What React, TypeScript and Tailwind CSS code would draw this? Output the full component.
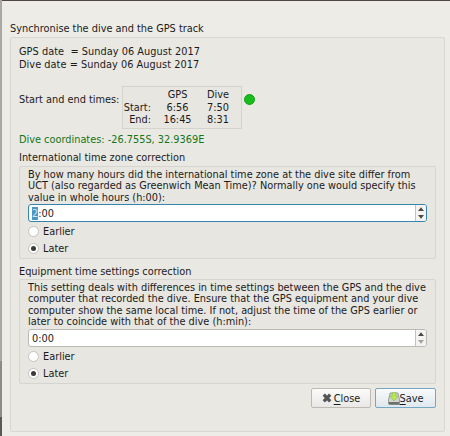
import { useState } from "react";

const ZONE_TEXT = [
  "By how many hours did the international time zone at the dive site differ from",
  "UCT (also regarded as Greenwich Mean Time)? Normally one would specify this",
  "value in whole hours (h:00):",
];

const EQUIPMENT_TEXT = [
  "This setting deals with differences in time settings between the GPS and the dive",
  "computer that recorded the dive. Ensure that the GPS equipment and your dive",
  "computer show the same local time. If not, adjust the time of the GPS earlier or",
  "later to coincide with that of the dive (h:min):",
];

function Paragraph({ lines }: { lines: string[] }) {
  return (
    <div>
      {lines.map((line) => (
        <p key={line} className="h-[11.3px] leading-[11.3px]">{line}</p>
      ))}
    </div>
  );
}

function SpinBox({ focused, minimum }: { focused?: boolean; minimum?: boolean }) {
  return (
    <div className={`flex h-[18px] w-[399px] items-center rounded-[3px] border bg-white ${focused ? "border-[#3584ae]" : "border-[#bcb9b5]"}`}>
      <div className="flex flex-1 pl-[3px] pt-[1px] leading-[13px]">
        {focused ? <span className="bg-[#4a96c4] text-[#d5e8f4]">2</span> : <span>0</span>}
        <span>:00</span>
      </div>
      <div className="flex h-full w-[11px] flex-col items-center justify-center gap-[4px] rounded-r-[2px] border-l border-[#c4c2be] bg-[#f4f3f1]">
        <svg width="6" height="4" viewBox="0 0 6 4"><path d="M0 4 3 .2 6 4Z" fill="#4b4845" /></svg>
        <svg width="6" height="4" viewBox="0 0 6 4"><path d="M0 0H6L3 3.8Z" fill={minimum ? "#a5a29e" : "#4b4845"} /></svg>
      </div>
    </div>
  );
}

function Radio({ label, checked, onSelect }: { label: string; checked: boolean; onSelect: () => void }) {
  return (
    <button type="button" role="radio" aria-checked={checked} onClick={onSelect} className="flex h-[17.3px] items-center gap-[4px]">
      <span className="flex size-[11px] items-center justify-center rounded-full border border-[#c5c2be] bg-white">
        {checked && <span className="size-[5px] rounded-full bg-[#3c3a3b]" />}
      </span>
      <span className="pt-[1px]">{label}</span>
    </button>
  );
}

function Choice() {
  const [value, setValue] = useState("Later");
  return (
    <div role="radiogroup" className="flex flex-col items-start pt-[0.4px]">
      {["Earlier", "Later"].map((name) => (
        <Radio key={name} label={name} checked={value === name} onSelect={() => setValue(name)} />
      ))}
    </div>
  );
}

function CrossIcon() {
  return (
    <svg width="10" height="10" viewBox="0 0 10 10">
      <path d="M1.8 1.6 8.2 8.4M8.2 1.6 1.8 8.4" stroke="#555" strokeWidth="3.2" />
    </svg>
  );
}

function SaveIcon() {
  return (
    <svg width="12" height="13" viewBox="0 0 12 13">
      <path d="M2 1H10L11.5 8V11.5Q11.5 12.5 10.5 12.5H1.5Q.5 12.5 .5 11.5V8Z" fill="#d0d3cf" stroke="#8b8e8b" strokeWidth=".8" />
      <path d="M.7 10H11.3V11.6Q11.2 12.4 10.4 12.4H1.6Q.8 12.4 .7 11.6Z" fill="#6d706e" />
      <path d="M4.2 .6H7.8V4.2H10L6 9 2 4.2H4.2Z" fill="#b9e84f" stroke="#8cba4c" strokeWidth=".6" />
    </svg>
  );
}

export default function App() {
  return (
    <main className="flex h-[436px] w-[450px] overflow-hidden whitespace-nowrap bg-[#edece7] font-['DejaVu_Sans',sans-serif] text-[9.77px] leading-[13px] text-[#1c1b1b]">
      <div className="flex w-[2px] flex-col">
        <div className="h-[361px] bg-[#aaa8a5]" />
        <div className="h-[56px] bg-[#8d8a87]" />
        <div className="flex-1 bg-[#5c5854]" />
      </div>
      <div className="flex flex-1 flex-col border-t border-[#4f4743] pl-[8px] pt-[21px]">
        <h1 className="h-[15px] leading-[14px]">Synchronise the dive and the GPS track</h1>
        <section className="flex h-[395px] w-[435px] flex-col rounded-[2px] border border-[#d9d7d2] bg-[#e9e8e3] pl-[8px] pt-[7px]">
          <p className="whitespace-pre tracking-[0.04px]">GPS date  = Sunday 06 August 2017</p>
          <p className="tracking-[0.04px]">Dive date = Sunday 06 August 2017</p>
          <div className="mt-[15px] flex h-[43px]">
            <span className="w-[103px] pt-[7px]">Start and end times:</span>
            <div className="grid w-[120px] grid-cols-[28px_47px_28px] grid-rows-[12.7px_12.7px_12.7px] justify-start gap-x-[3px] border border-[#d5d3ce] bg-[#e7e6e1] pt-[2px] leading-[12.7px]">
              <span /><span className="text-center">GPS</span><span className="text-center">Dive</span>
              <span className="text-right">Start:</span><span className="text-center">6:56</span><span className="text-center">7:50</span>
              <span className="text-right">End:</span><span className="text-center">16:45</span><span className="text-center">8:31</span>
            </div>
            <span className="ml-[2px] mt-[8px] size-[11px] rounded-full border border-[#16a018] bg-[#18bd1b]" />
          </div>
          <p className="mt-[4px] text-[#147618]">Dive coordinates: -26.755S, 32.9369E</p>
          <h2 className="mt-[5px] h-[15px]">International time zone correction</h2>
          <section className="h-[93px] w-[417px] rounded-[2px] border border-[#d7d5d0] bg-[#e7e6e1] pl-[8px] pt-[2px]">
            <Paragraph lines={ZONE_TEXT} />
            <div className="mt-[1.1px]"><SpinBox focused /></div>
            <Choice />
          </section>
          <h2 className="mt-[6px] h-[14px]">Equipment time settings correction</h2>
          <section className="h-[105px] w-[417px] rounded-[2px] border border-[#d7d5d0] bg-[#e7e6e1] pl-[8px] pt-[2px]">
            <Paragraph lines={EQUIPMENT_TEXT} />
            <div className="mt-[1.8px]"><SpinBox minimum /></div>
            <Choice />
          </section>
          <div className="ml-[292px] mt-[4px] flex gap-[4px]">
            <button type="button" className="flex h-[20px] w-[60px] items-center justify-center gap-[2px] rounded-[2px] border border-[#bdbab6] bg-gradient-to-b from-[#fbfbfa] to-[#eae8e5]">
              <CrossIcon /><span><u className="underline-offset-[2px]">C</u>lose</span>
            </button>
            <button type="button" className="flex h-[20px] w-[61px] items-center justify-center rounded-[2px] border border-[#75a6c3] bg-gradient-to-b from-[#f8fafb] to-[#dfe8ed]">
              <SaveIcon /><span><u className="underline-offset-[2px]">S</u>ave</span>
            </button>
          </div>
        </section>
      </div>
    </main>
  );
}
